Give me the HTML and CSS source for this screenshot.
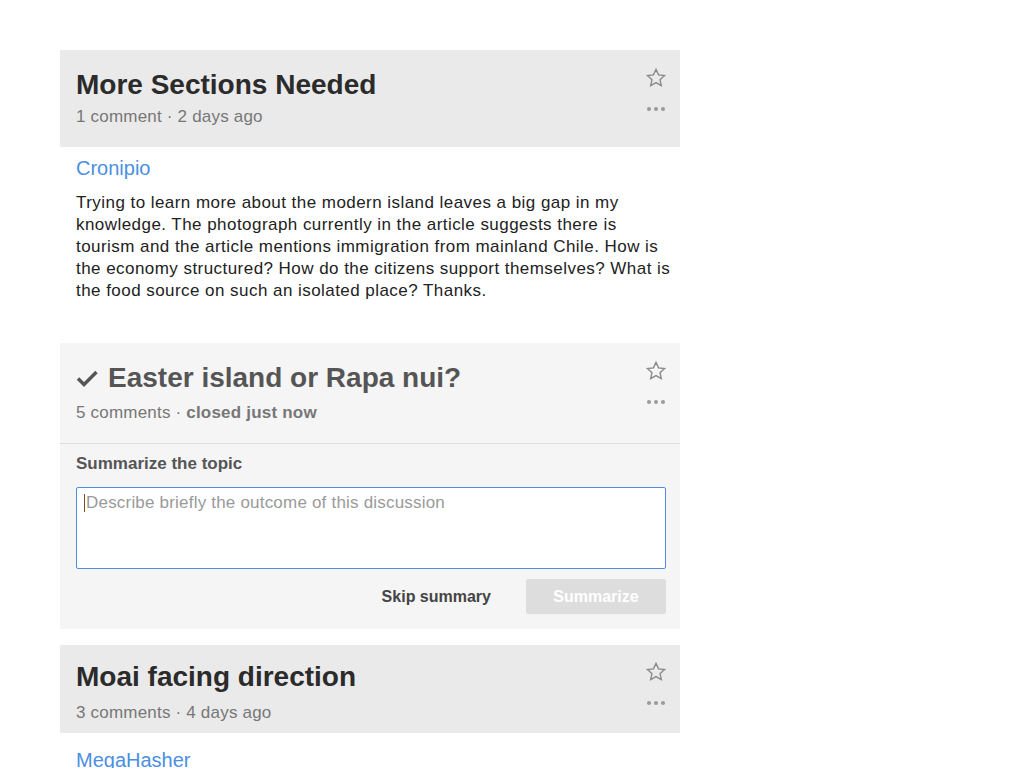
FILE: index.html
```html
<!DOCTYPE html>
<html lang="en">
<head>
<meta charset="utf-8">
<title>Topics</title>
<link rel="stylesheet" href="styles.css">
</head>
<body>
<main class="topics">
  <section class="card">
    <header class="card-head">
      <div class="head-main">
        <h2 class="title">More Sections Needed</h2>
        <div class="meta">1 comment · 2 days ago</div>
      </div>
      <div class="actions">
        <svg class="star" width="22" height="22" viewBox="0 0 24 24"><path d="M12 2.6l2.8 6 6.5.7-4.9 4.5 1.4 6.5L12 17l-5.8 3.3 1.4-6.5-4.9-4.5 6.5-.7z"/></svg>
        <svg class="dots" width="20" height="4" viewBox="0 0 20 4"><circle cx="3" cy="2" r="2"/><circle cx="10" cy="2" r="2"/><circle cx="17" cy="2" r="2"/></svg>
      </div>
    </header>
    <div class="card-body">
      <a class="author" href="#">Cronipio</a>
      <p class="text">Trying to learn more about the modern island leaves a big gap in my knowledge. The photograph currently in the article suggests there is tourism and the article mentions immigration from mainland Chile. How is the economy structured? How do the citizens support themselves? What is the food source on such an isolated place? Thanks.</p>
    </div>
  </section>

  <section class="card card--closed">
    <header class="card-head card-head--bordered">
      <div class="head-main">
        <h2 class="title title--closed"><svg class="check" width="22" height="18" viewBox="0 0 22 18"><polyline points="2,9.5 8,15.5 20.5,3"/></svg>Easter island or Rapa nui?</h2>
        <div class="meta">5 comments · <strong>closed just now</strong></div>
      </div>
      <div class="actions">
        <svg class="star" width="22" height="22" viewBox="0 0 24 24"><path d="M12 2.6l2.8 6 6.5.7-4.9 4.5 1.4 6.5L12 17l-5.8 3.3 1.4-6.5-4.9-4.5 6.5-.7z"/></svg>
        <svg class="dots" width="20" height="4" viewBox="0 0 20 4"><circle cx="3" cy="2" r="2"/><circle cx="10" cy="2" r="2"/><circle cx="17" cy="2" r="2"/></svg>
      </div>
    </header>
    <form class="summary">
      <label class="summary-label" for="summary">Summarize the topic</label>
      <div class="summary-field">
        <span class="caret"></span>
        <textarea id="summary" class="summary-input" placeholder="Describe briefly the outcome of this discussion"></textarea>
      </div>
      <div class="summary-actions">
        <button type="button" class="btn btn--skip">Skip summary</button>
        <button type="button" class="btn btn--primary" disabled>Summarize</button>
      </div>
    </form>
  </section>

  <section class="card card--compact">
    <header class="card-head">
      <div class="head-main">
        <h2 class="title">Moai facing direction</h2>
        <div class="meta">3 comments · 4 days ago</div>
      </div>
      <div class="actions">
        <svg class="star" width="22" height="22" viewBox="0 0 24 24"><path d="M12 2.6l2.8 6 6.5.7-4.9 4.5 1.4 6.5L12 17l-5.8 3.3 1.4-6.5-4.9-4.5 6.5-.7z"/></svg>
        <svg class="dots" width="20" height="4" viewBox="0 0 20 4"><circle cx="3" cy="2" r="2"/><circle cx="10" cy="2" r="2"/><circle cx="17" cy="2" r="2"/></svg>
      </div>
    </header>
    <div class="card-body">
      <a class="author" href="#">MegaHasher</a>
    </div>
  </section>
</main>
</body>
</html>
```
FILE: styles.css
```css
* { box-sizing: border-box; }

html, body {
  margin: 0;
  padding: 0;
  background: #ffffff;
}

body {
  font-family: "Liberation Sans", Arial, Helvetica, sans-serif;
  color: #222;
  font-size: 16px;
}

.topics {
  width: 620px;
  margin-left: 60px;
  padding-top: 50px;
  display: flex;
  flex-direction: column;
  gap: 16px;
}

.card-head {
  display: flex;
  justify-content: space-between;
  align-items: flex-start;
  background: #eaeaea;
  padding: 18px 12px 19px 16px;
}

.card--closed {
  background: #f5f5f5;
}

.card--closed .card-head {
  background: #f5f5f5;
  padding-bottom: 19px;
}

.card-head--bordered {
  border-bottom: 1px solid #dddddd;
}

.title {
  margin: 0;
  font-size: 28px;
  line-height: 34px;
  font-weight: bold;
  color: #2b2b2b;
  display: flex;
  align-items: center;
}

.title--closed {
  color: #555;
}

.check {
  fill: none;
  stroke: #555;
  stroke-width: 3.4;
  stroke-linecap: butt;
  margin-right: 10px;
  flex: none;
}

.meta {
  margin-top: 4px;
  font-size: 17px;
  letter-spacing: 0.2px;
  line-height: 22px;
  color: #777;
}

.card--closed .meta {
  margin-top: 7px;
}

.meta strong {
  font-weight: bold;
}

.actions {
  display: flex;
  flex-direction: column;
  align-items: center;
  gap: 18px;
  width: 24px;
  margin-top: -1px;
}

.star {
  display: block;
  fill: none;
  stroke: #8a8a8a;
  stroke-width: 1.5;
  stroke-linejoin: miter;
}

.dots {
  display: block;
  fill: #9a9a9a;
}

.card-body {
  padding: 7px 4px 25px 16px;
  background: #ffffff;
}

.author {
  display: block;
  font-size: 20px;
  line-height: 28px;
  color: #4a8fe2;
  text-decoration: none;
}

.text {
  margin: 10px 0 0;
  font-size: 17px;
  letter-spacing: 0.45px;
  line-height: 22px;
  color: #222;
}

.summary {
  display: flex;
  flex-direction: column;
  padding: 9px 14px 15px 16px;
}

.summary-label {
  font-size: 17px;
  line-height: 22px;
  font-weight: bold;
  color: #555;
}

.summary-field {
  position: relative;
  margin-top: 12px;
  height: 82px;
}

.caret {
  position: absolute;
  left: 8px;
  top: 7px;
  width: 1px;
  height: 18px;
  background: #7a4a2a;
  z-index: 1;
}

.summary-input {
  display: block;
  height: 82px;
  width: 100%;
  resize: none;
  border: 1px solid #4a8fe2;
  border-radius: 2px;
  background: #fff;
  padding: 5px 8px 5px 9px;
  font-family: "Liberation Sans", Arial, sans-serif;
  font-size: 17px;
  letter-spacing: 0.2px;
  line-height: 20px;
  color: #222;
  outline: none;
}

.summary-input::placeholder {
  color: #9a9a9a;
}

.summary-actions {
  margin-top: 10px;
  display: flex;
  justify-content: flex-end;
  gap: 18px;
}

.btn {
  height: 35px;
  border: 0;
  border-radius: 2px;
  font-family: "Liberation Sans", Arial, sans-serif;
  font-size: 16px;
  font-weight: bold;
  cursor: pointer;
}

.btn--skip {
  background: transparent;
  color: #444;
  padding: 0 17px;
}

.btn--primary {
  width: 140px;
  background: #dddddd;
  color: #ffffff;
}

.card--compact .card-head {
  padding-top: 15px;
  padding-bottom: 9px;
}

.card--compact .meta {
  margin-top: 8px;
}

.card--compact .actions {
  margin-top: 1px;
}

.card--compact .card-body {
  padding-top: 13px;
}
```
